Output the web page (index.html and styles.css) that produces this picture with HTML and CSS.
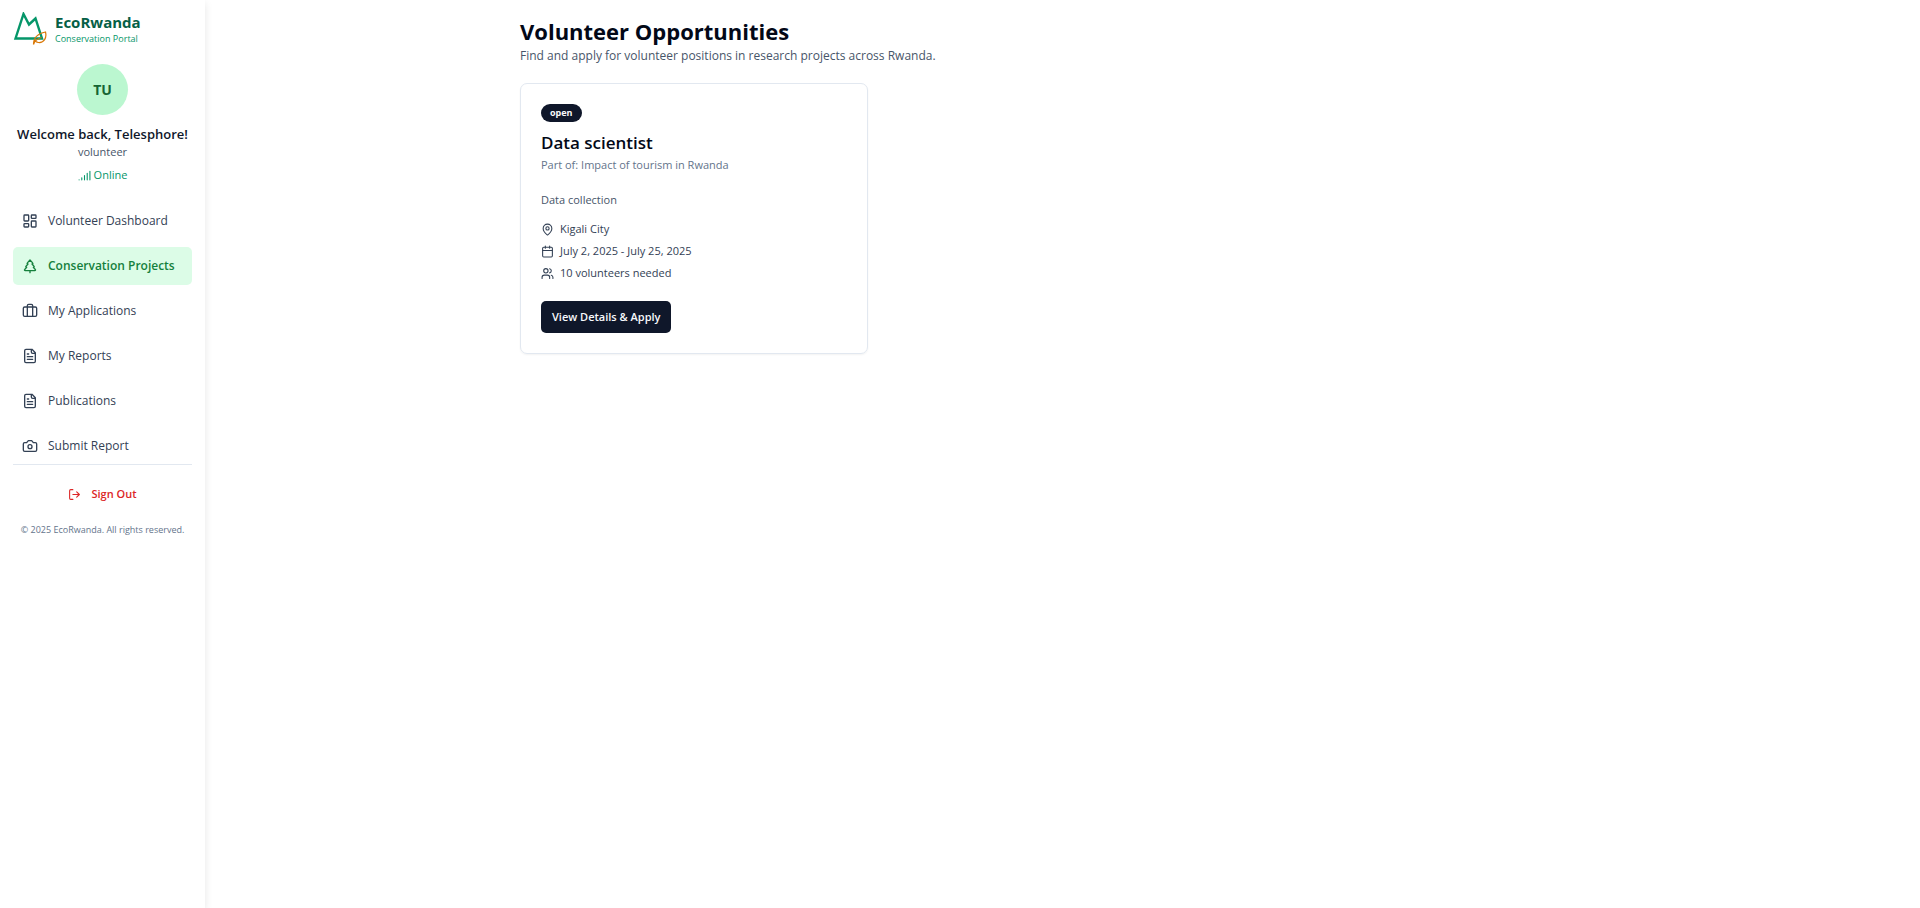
FILE: index.html
```html
<!DOCTYPE html>
<html lang="en">
<head>
<meta charset="utf-8">
<meta name="viewport" content="width=device-width, initial-scale=1">
<title>EcoRwanda - Volunteer Opportunities</title>
<link rel="stylesheet" href="styles.css">
</head>
<body>
<div class="app">
  <aside class="sidebar">
    <div class="brand">
      <svg class="brand-logo" viewBox="0 0 34 34" fill="none" aria-hidden="true">
        <path d="M2.500 26.500 L10.500 2 L16 12.500 L22.500 6.500 L29 26.500 Z" stroke="#059669" stroke-width="2.400"/>
        <path d="M20.500 32.500 C20.500 25 25 21.500 32.500 20 C34 26 31 31 25.500 30.500 C23.500 30.500 21.500 29 21.500 27.500 M20.500 32.500 C22 28 25 26.500 28.500 25.500" stroke="#d97706" stroke-width="1.200"/>
      </svg>
      <div class="brand-text">
        <span class="brand-name">EcoRwanda</span>
        <span class="brand-sub">Conservation Portal</span>
      </div>
    </div>
    <div class="profile">
      <div class="avatar">TU</div>
      <h2 class="welcome">Welcome back, Telesphore!</h2>
      <p class="role">volunteer</p>
      <p class="status">
        <svg class="icon-sm" viewBox="0 0 24 24"><path d="M2 20h.01M7 20v-4M12 20v-8M17 20V8M22 4v16"/></svg>
        <span>Online</span>
      </p>
    </div>
    <nav class="nav">
      <a class="nav-item" href="#"><svg class="icon" viewBox="0 0 24 24"><rect width="7" height="9" x="3" y="3" rx="1"/><rect width="7" height="5" x="14" y="3" rx="1"/><rect width="7" height="9" x="14" y="12" rx="1"/><rect width="7" height="5" x="3" y="16" rx="1"/></svg>Volunteer Dashboard</a>
      <a class="nav-item active" href="#"><svg class="icon" viewBox="0 0 24 24"><path d="m17 14 3 3.300a1 1 0 0 1-.7 1.700H4.700a1 1 0 0 1-.7-1.700L7 14h-.3a1 1 0 0 1-.7-1.700L9 9h-.2A1 1 0 0 1 8 7.300L12 3l4 4.300a1 1 0 0 1-.8 1.700H15l3 3.300a1 1 0 0 1-.7 1.700H17ZM12 22v-3"/></svg>Conservation Projects</a>
      <a class="nav-item" href="#"><svg class="icon" viewBox="0 0 24 24"><rect width="20" height="14" x="2" y="6" rx="2"/><path d="M16 20V4a2 2 0 0 0-2-2h-4a2 2 0 0 0-2 2v16"/></svg>My Applications</a>
      <a class="nav-item" href="#"><svg class="icon" viewBox="0 0 24 24"><path d="M15 2H6a2 2 0 0 0-2 2v16a2 2 0 0 0 2 2h12a2 2 0 0 0 2-2V7ZM14 2v4a2 2 0 0 0 2 2h4M10 9H8M16 13H8M16 17H8"/></svg>My Reports</a>
      <a class="nav-item" href="#"><svg class="icon" viewBox="0 0 24 24"><path d="M15 2H6a2 2 0 0 0-2 2v16a2 2 0 0 0 2 2h12a2 2 0 0 0 2-2V7ZM14 2v4a2 2 0 0 0 2 2h4M10 9H8M16 13H8M16 17H8"/></svg>Publications</a>
      <a class="nav-item" href="#"><svg class="icon" viewBox="0 0 24 24"><path d="M14.500 4h-5L7 7H4a2 2 0 0 0-2 2v9a2 2 0 0 0 2 2h16a2 2 0 0 0 2-2V9a2 2 0 0 0-2-2h-3l-2.500-3z"/><circle cx="12" cy="13" r="3"/></svg>Submit Report</a>
    </nav>
    <div class="sidebar-foot">
      <button class="signout" type="button"><svg class="icon-sm" viewBox="0 0 24 24"><path d="M9 21H5a2 2 0 0 1-2-2V5a2 2 0 0 1 2-2h4M16 17l5-5-5-5M21 12H9"/></svg>Sign Out</button>
      <p class="copyright">© 2025 EcoRwanda. All rights reserved.</p>
    </div>
  </aside>
  <main class="main">
    <div class="container">
      <h1 class="title">Volunteer Opportunities</h1>
      <p class="subtitle">Find and apply for volunteer positions in research projects across Rwanda.</p>
      <div class="cards">
        <article class="card">
          <span class="badge">open</span>
          <h3 class="card-title">Data scientist</h3>
          <p class="card-project">Part of: Impact of tourism in Rwanda</p>
          <p class="card-desc">Data collection</p>
          <ul class="facts">
            <li class="fact"><svg class="icon-sm" viewBox="0 0 24 24"><path d="M20 10c0 5-5.500 10.200-7.400 11.800a1 1 0 0 1-1.200 0C9.500 20.200 4 15 4 10a8 8 0 0 1 16 0"/><circle cx="12" cy="10" r="3"/></svg>Kigali City</li>
            <li class="fact"><svg class="icon-sm" viewBox="0 0 24 24"><path d="M8 2v4M16 2v4M3 10h18"/><rect width="18" height="18" x="3" y="4" rx="2"/></svg>July 2, 2025 - July 25, 2025</li>
            <li class="fact"><svg class="icon-sm" viewBox="0 0 24 24"><path d="M16 21v-2a4 4 0 0 0-4-4H6a4 4 0 0 0-4 4v2"/><circle cx="9" cy="7" r="4"/><path d="M22 21v-2a4 4 0 0 0-3-3.870M16 3.130a4 4 0 0 1 0 7.750"/></svg>10 volunteers needed</li>
          </ul>
          <button class="apply" type="button">View Details &amp; Apply</button>
        </article>
      </div>
    </div>
  </main>
</div>
</body>
</html>
```
FILE: styles.css
```css
* { box-sizing: border-box; margin: 0; padding: 0; }

body {
  font-family: "Segoe UI", "Open Sans", "Noto Sans", sans-serif;
  font-size: 12px;
  line-height: 16px;
  color: #020817;
  background: #fff;
}

svg { flex: none; }
.icon, .icon-sm { fill: none; stroke: currentColor; stroke-width: 2; stroke-linecap: round; stroke-linejoin: round; }
.icon { width: 16px; height: 16px; }
.icon-sm { width: 13px; height: 13px; }

.app { display: flex; min-height: 100vh; }

.sidebar {
  flex: none;
  width: 205px;
  padding: 12px 13px;
  box-shadow: 0 3px 8px rgba(0, 0, 0, 0.1);
}

.brand { display: flex; align-items: center; gap: 8px; }
.brand-logo { width: 34px; height: 34px; }
.brand-text { display: flex; flex-direction: column; }
.brand-name { font-size: 15px; line-height: 20px; font-weight: 700; color: #065f46; }
.brand-sub { font-size: 9px; line-height: 14px; color: #059669; }

.profile { display: flex; flex-direction: column; align-items: center; padding-top: 18px; }
.avatar {
  display: flex; align-items: center; justify-content: center;
  width: 51px; height: 51px;
  border-radius: 50%;
  background: #bbf7d0;
  color: #166534;
  font-size: 14px; font-weight: 700;
}
.welcome { margin-top: 10px; font-size: 13px; line-height: 18px; font-weight: 600; color: #0f172a; white-space: nowrap; }
.role { margin-top: 1px; font-size: 11px; color: #475569; }
.status { display: flex; align-items: center; gap: 3px; margin-top: 7px; font-size: 11px; color: #059669; }

.nav { display: flex; flex-direction: column; gap: 7px; margin-top: 19px; }
.nav-item {
  display: flex; align-items: center; gap: 10px;
  height: 38px;
  padding: 0 9px;
  border-radius: 5px;
  color: #334155;
  text-decoration: none;
  white-space: nowrap;
}
.nav-item.active { background: #dcfce7; color: #15803d; font-weight: 600; }

.sidebar-foot {
  display: flex; flex-direction: column; align-items: center;
  margin-top: -1px;
  padding-top: 13px;
  border-top: 1px solid #e2e8f0;
}
.signout {
  display: flex; align-items: center; gap: 10px;
  height: 32px;
  padding: 0 10px;
  border: 0;
  background: none;
  color: #dc2626;
  font: 600 11px/16px "Segoe UI", "Open Sans", sans-serif;
}
.copyright { margin-top: 12px; font-size: 9px; color: #64748b; white-space: nowrap; }

.main { flex: 1; min-width: 0; }
.container { max-width: 1125px; margin: 0 auto; padding: 17px 20px; }
.title { font-size: 22px; line-height: 28px; font-weight: 700; }
.subtitle { margin-top: 2px; line-height: 18px; color: #475569; }
.cards { display: grid; grid-template-columns: repeat(3, minmax(0, 1fr)); gap: 20px; margin-top: 18px; }

.card {
  padding: 20px;
  border: 1px solid #e2e8f0;
  border-radius: 7px;
  box-shadow: 0 1px 2px rgba(0, 0, 0, 0.05);
}
.badge {
  display: block;
  width: fit-content;
  padding: 1px 9px;
  border-radius: 9px;
  background: #0f172a;
  color: #f8fafc;
  font-size: 9px; font-weight: 700;
}
.card-title { margin-top: 9px; font-size: 17px; line-height: 24px; font-weight: 600; }
.card-project { margin-top: 2px; font-size: 11px; color: #64748b; }
.card-desc { margin-top: 19px; font-size: 11px; color: #475569; }
.facts { display: flex; flex-direction: column; gap: 6px; margin-top: 13px; list-style: none; }
.fact { display: flex; align-items: center; gap: 6px; font-size: 11px; color: #334155; }
.apply {
  height: 32px;
  margin-top: 20px;
  padding: 0 11px;
  border: 0;
  border-radius: 5px;
  background: #0f172a;
  color: #f8fafc;
  font: 600 11px/16px "Segoe UI", "Open Sans", sans-serif;
}
```
